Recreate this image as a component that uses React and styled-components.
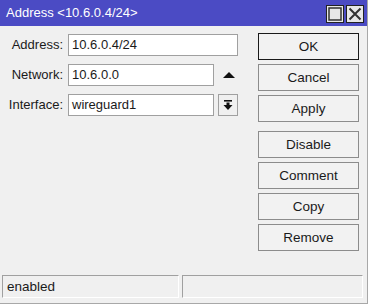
import styled, { createGlobalStyle } from "styled-components";

const GlobalStyle = createGlobalStyle`
  html, body {
    margin: 0;
    padding: 0;
    background: #f0f0f0;
  }
  body {
    font-family: "Liberation Sans", Arial, sans-serif;
    color: #1a1a1a;
  }
`;

function App() {
  return (
    <>
      <GlobalStyle />
      <Window>
        <TitleBar>
          <Title>Address &lt;10.6.0.4/24&gt;</Title>
          <TitleButtons>
            <TitleButton aria-label='maximize'>
              <svg width='14' height='14' viewBox='0 0 14 14'>
                <rect x='1' y='1' width='12' height='12' fill='none' stroke='#333' strokeWidth='1.5' />
              </svg>
            </TitleButton>
            <TitleButton aria-label='close'>
              <svg width='14' height='14' viewBox='0 0 14 14'>
                <path d='M1.5 1.5 L12.5 12.5 M12.5 1.5 L1.5 12.5' stroke='#333' strokeWidth='2' />
              </svg>
            </TitleButton>
          </TitleButtons>
        </TitleBar>

        <Body>
          <Form>
            <Label>Address:</Label>
            <Input $wide>10.6.0.4/24</Input>

            <Label>Network:</Label>
            <Input>10.6.0.0</Input>
            <Arrow>
              <svg width='12' height='8' viewBox='0 0 12 8'>
                <polygon points='0,7 6,1 12,7' fill='#111' />
              </svg>
            </Arrow>

            <Label>Interface:</Label>
            <Input>wireguard1</Input>
            <DropButton>
              <svg width='10' height='11' viewBox='0 0 10 11'>
                <rect x='1' y='0' width='8' height='1.6' fill='#111' />
                <rect x='3.5' y='2.5' width='3' height='3' fill='#111' />
                <polygon points='0.5,5 9.5,5 5,10' fill='#111' />
              </svg>
            </DropButton>
          </Form>

          <Buttons>
            <ButtonGroup>
              <Button $primary>OK</Button>
              <Button>Cancel</Button>
              <Button>Apply</Button>
            </ButtonGroup>
            <ButtonGroup>
              <Button>Disable</Button>
              <Button>Comment</Button>
              <Button>Copy</Button>
              <Button>Remove</Button>
            </ButtonGroup>
          </Buttons>
        </Body>

        <StatusBar>
          <StatusPane $width={177}>enabled</StatusPane>
          <StatusPane $width={181}></StatusPane>
        </StatusBar>
      </Window>
    </>
  );
}

export default App;

const Window = styled.div`
  width: 367px;
  height: 303px;
  border-right: 1px solid #a8a8a8;
  border-bottom: 1px solid #a8a8a8;
  background: #f0f0f0;
  display: flex;
  flex-direction: column;
`;

const TitleBar = styled.div`
  height: 26px;
  background: #4b4bc4;
  display: flex;
  align-items: center;
  justify-content: space-between;
  padding: 0 3px 0 6px;
  box-sizing: border-box;
`;

const Title = styled.span`
  color: #fff;
  font-size: 13px;
  margin-top: -1px;
`;

const TitleButtons = styled.div`
  display: flex;
  gap: 2px;
  margin-top: 1px;
`;

const TitleButton = styled.div`
  width: 18px;
  height: 18px;
  box-sizing: border-box;
  border: 1px solid #222;
  background: #e8e8e8;
  display: flex;
  align-items: center;
  justify-content: center;
`;

const Body = styled.div`
  display: flex;
  justify-content: space-between;
  padding: 7px 8px 0 0;
  flex: 1;
`;

const Form = styled.div`
  display: grid;
  grid-template-columns: 63px 146px 19px;
  grid-auto-rows: 22px;
  column-gap: 5px;
  row-gap: 8px;
  align-content: start;
  margin-top: 1px;
`;

const Label = styled.div`
  font-size: 13px;
  text-align: right;
  line-height: 22px;
`;

const Input = styled.div`
  grid-column: ${(p) => (p.$wide ? "2 / span 2" : "auto")};
  background: #fff;
  border: 1px solid #a0a0a0;
  box-sizing: border-box;
  font-size: 13px;
  line-height: 20px;
  padding-left: 3px;
`;

const Arrow = styled.div`
  display: flex;
  align-items: center;
  justify-content: flex-end;
  padding-right: 3px;
`;

const DropButton = styled.div`
  justify-self: end;
  width: 20px;
  height: 22px;
  box-sizing: border-box;
  border: 1px solid #a0a0a0;
  background: #f0f0f0;
  display: flex;
  align-items: center;
  justify-content: center;
`;

const Buttons = styled.div`
  display: flex;
  flex-direction: column;
  gap: 9px;
`;

const ButtonGroup = styled.div`
  display: flex;
  flex-direction: column;
  gap: 4px;
`;

const Button = styled.div`
  width: 101px;
  height: 27px;
  box-sizing: border-box;
  border: 1px solid ${(p) => (p.$primary ? "#1a1a1a" : "#8c8c8c")};
  background: #f2f2f2;
  font-size: 13.5px;
  display: flex;
  align-items: center;
  justify-content: center;
`;

const StatusBar = styled.div`
  display: flex;
  gap: 3px;
  padding: 0 3px 5px 2px;
`;

const StatusPane = styled.div`
  width: ${(p) => p.$width}px;
  height: 23px;
  box-sizing: border-box;
  border-top: 1px solid #a0a0a0;
  border-left: 1px solid #a0a0a0;
  border-bottom: 1px solid #ffffff;
  border-right: 1px solid #ffffff;
  font-size: 13.5px;
  line-height: 21px;
  padding-left: 4px;
`;
